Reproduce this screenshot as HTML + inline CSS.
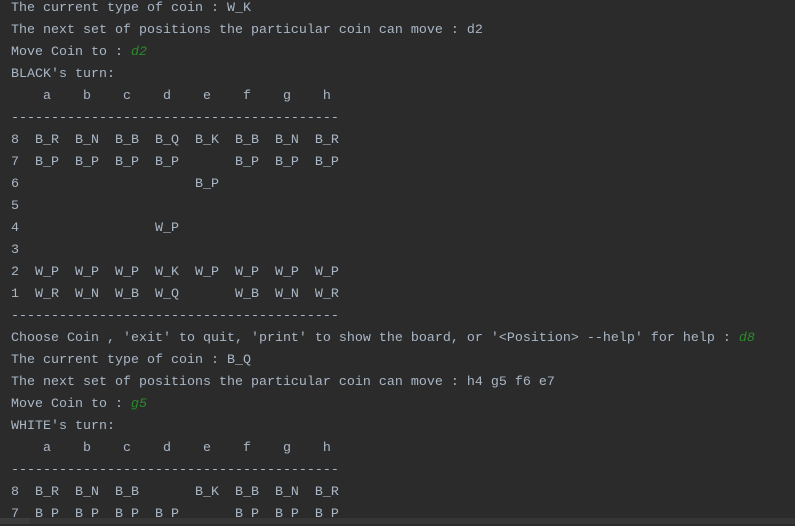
<!DOCTYPE html>
<html><head><style>
html,body{margin:0;padding:0;width:795px;height:524px;overflow:hidden;background:#2b2b2b;}
pre{position:absolute;left:11px;top:-2px;margin:0;font-family:"Liberation Mono",monospace;font-size:13.33px;line-height:22px;color:#a9b7c6;}
i{color:#2a8c2a;}
.sb{position:absolute;left:0;top:518px;width:795px;height:6px;background:#353535;}
.th{position:absolute;left:0;top:518px;width:30px;height:6px;background:#3c3c3c;}
</style></head><body>
<pre>The current type of coin : W_K
The next set of positions the particular coin can move : d2
Move Coin to : <i>d2</i>
BLACK's turn:
    a    b    c    d    e    f    g    h
-----------------------------------------
8  B_R  B_N  B_B  B_Q  B_K  B_B  B_N  B_R
7  B_P  B_P  B_P  B_P       B_P  B_P  B_P
6                      B_P
5
4                 W_P
3
2  W_P  W_P  W_P  W_K  W_P  W_P  W_P  W_P
1  W_R  W_N  W_B  W_Q       W_B  W_N  W_R
-----------------------------------------
Choose Coin , 'exit' to quit, 'print' to show the board, or '&lt;Position&gt; --help' for help : <i>d8</i>
The current type of coin : B_Q
The next set of positions the particular coin can move : h4 g5 f6 e7
Move Coin to : <i>g5</i>
WHITE's turn:
    a    b    c    d    e    f    g    h
-----------------------------------------
8  B_R  B_N  B_B       B_K  B_B  B_N  B_R
7  B_P  B_P  B_P  B_P       B_P  B_P  B_P</pre>
<div class="sb"></div><div class="th"></div>
</body></html>
